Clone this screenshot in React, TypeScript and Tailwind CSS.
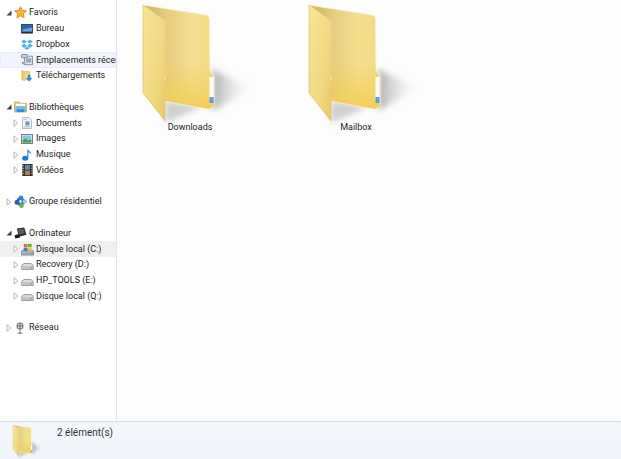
import React from "react";

const Tri = ({ open }: { open?: boolean }) =>
  open ? (
    <svg width="6" height="6" viewBox="0 0 6 6" className="shrink-0"><path d="M5.5 0.5V5.5H0.5Z" fill="#404040" /></svg>
  ) : (
    <svg width="6" height="8" viewBox="0 0 6 8" className="shrink-0"><path d="M1 .8L4.8 4 1 7.2Z" fill="#fff" stroke="#a6a6a6" strokeWidth=".8" /></svg>
  );

const Star = () => (
  <svg width="13" height="13" viewBox="0 0 14 14"><path d="M7 .8l1.900 4 4.400.5-3.200 3 .8 4.400L7 10.600l-3.900 2.100.8-4.400-3.200-3 4.400-.5z" fill="#f7b733" stroke="#e0792b" strokeWidth=".9" /></svg>
);
const Desktop = () => (
  <svg width="12" height="10" viewBox="0 0 14 12"><rect x=".5" y=".5" width="13" height="9" fill="#2a63b4" stroke="#1d3558" /><path d="M1 7.500c3-2 7-1.500 12-3.500V9H1z" fill="#6fa6e0" /><rect x="0" y="9.500" width="14" height="2" fill="#26313f" /></svg>
);
const Dropbox = () => (
  <svg width="12" height="11" viewBox="0 0 14 13" fill="#5cb0ec"><path d="M3.500 .5L7 3 3.500 5.500 0 3zM10.500 .5L14 3l-3.500 2.500L7 3zM3.500 5.500L7 8l-3.500 2.500L0 8zM10.500 5.500L14 8l-3.500 2.500L7 8zM3.800 11L7 8.800 10.200 11 7 13z" /></svg>
);
const Recent = () => (
  <svg width="12" height="12" viewBox="0 0 14 14"><rect x="4" y="2.500" width="9.500" height="10" fill="#dfe6ec" stroke="#7c8a96" /><rect x="6" y="5" width="6" height="5" fill="#8fa9c0" /><rect x=".5" y=".5" width="7" height="4" rx="1.500" fill="#c9cfd4" stroke="#70787f" /><rect x="1" y="9" width="4" height="3" fill="#9aa4ac" /></svg>
);
const DownloadIcon = () => (
  <svg width="12" height="13" viewBox="0 0 14 14"><path d="M1 1l3 1.500h6V12H1z" fill="#f2d684" stroke="#c8a654" strokeWidth=".7" /><path d="M1 1l3.500 2v11L1 12z" fill="#e9c766" /><path d="M8 6h3v4h2.200l-3.700 4-3.700-4H8z" fill="#2d86e0" /></svg>
);
const Libraries = () => (
  <svg width="13" height="12" viewBox="0 0 14 13"><path d="M.5 1h5l1 1.500h7V12H.5z" fill="#ecc66c" stroke="#bb9a4c" strokeWidth=".7" /><rect x="2" y="3" width="10" height="4" fill="#fff" /><path d="M.8 12l1-6.500h11.400V12z" fill="#7cbce6" /><path d="M3 9h8v3H3z" fill="#3c8ccb" /></svg>
);
const Docs = () => (
  <svg width="10" height="12" viewBox="0 0 12 14"><path d="M.5.500h8l3 3v10H.500z" fill="#f6f7f9" stroke="#a3abb3" /><rect x="4" y="5" width="5" height="5" fill="#6d9ad0" /><path d="M2 11.500h8M2 3h4" stroke="#a9b2ba" /></svg>
);
const Images = () => (
  <svg width="12" height="10" viewBox="0 0 13 11"><rect x=".5" y=".5" width="12" height="10" fill="#fff" stroke="#66727c" /><rect x="1.500" y="1.500" width="10" height="5" fill="#8cc4ec" /><path d="M1.500 9.500V7l3-2 3 2 4-1v3.500z" fill="#4d9a53" /></svg>
);
const Music = () => (
  <svg width="11" height="13" viewBox="0 0 12 14"><ellipse cx="3.500" cy="11" rx="3.300" ry="2.700" fill="#2476c9" /><path d="M5.800 11V.5c.5 2.500 4.500 3 4.500 6.500-1-1.800-2.800-2.300-3.300-2.500V11z" fill="#2f86d8" /></svg>
);
const Video = () => (
  <svg width="11" height="12" viewBox="0 0 12 14"><rect width="12" height="14" fill="#2c3138" /><rect x="3" y="1" width="6" height="5.500" fill="#5d8fb5" /><rect x="3" y="7.500" width="6" height="5.500" fill="#b27c4a" /><path d="M1 1.500v1M1 4.500v1M1 7.500v1M1 10.500v1M11 1.500v1M11 4.500v1M11 7.500v1M11 10.500v1" stroke="#ddd" strokeWidth="1.300" /></svg>
);
const Home = () => (
  <svg width="13" height="13" viewBox="0 0 14 14"><circle cx="7" cy="7" r="4.500" fill="#2e66b8" /><circle cx="7.500" cy="3" r="2.500" fill="#3f80cf" /><circle cx="3" cy="8" r="2.500" fill="#2f5fb0" /><circle cx="8" cy="11.500" r="2.500" fill="#69b24a" /><circle cx="11.500" cy="7" r="2.300" fill="#8ec7e8" /><circle cx="7" cy="7" r="1.500" fill="#dff0fa" /></svg>
);
const Computer = () => (
  <svg width="13" height="12" viewBox="0 0 14 13"><path d="M3 1.500l8-1 2.500 8-8 2z" fill="#2b2d2e" /><path d="M4.500 2.500l5.500-.7 1.500 5-5.500 1.200z" fill="#59605f" /><path d="M.5 9l5-1.500 1 4-5 1z" fill="#1a1a1a" /></svg>
);
const DriveC = () => (
  <svg width="13" height="13" viewBox="0 0 14 14"><path d="M0 9.500l2-2h10l2 2V13H0z" fill="#a8afb8" stroke="#59626b" strokeWidth=".6" /><rect x="11" y="10.500" width="2" height="1.200" fill="#4fc04f" /><rect x="3" y="1" width="4" height="3.500" fill="#e2672a" /><rect x="7.500" y="1" width="4" height="3.500" fill="#6bb03f" /><rect x="3" y="5" width="4" height="3.500" fill="#3a7fd0" /><rect x="7.500" y="5" width="4" height="3.500" fill="#f0c53c" /></svg>
);
const Drive = () => (
  <svg width="13" height="7" viewBox="0 0 14 8" className="mt-[3px]"><path d="M.5 3L2.800.5h8.400L13.500 3v4.500H.500z" fill="#d8dadc" stroke="#6b7278" strokeWidth=".8" /><path d="M1 3.500h12v3.500H1z" fill="#bfc3c6" /><rect x="10.500" y="4.500" width="2" height="1.300" fill="#55bd55" /></svg>
);
const Network = () => (
  <svg width="8" height="12" viewBox="0 0 10 14"><path d="M5 7v7M2 13.500h6" stroke="#555" /><rect x="1.500" y="1" width="7" height="7" rx="2" fill="#d8dadb" stroke="#3f4548" /><path d="M1 4.500h8M5 1v7" stroke="#555" /></svg>
);

type RowProps = { icon: React.ReactNode; label: string; sub?: boolean; tri?: "open" | "closed"; hover?: "light" | "grey" };

const Row = ({ icon, label, sub, tri, hover }: RowProps) => (
  <div
    className={`flex h-[15.75px] items-center ${sub ? "pl-[12px]" : "pl-[5px]"} ${
      hover === "light" ? "bg-[#f1f5fb] shadow-[inset_0_0_0_0.5px_#dfe8f4]" : hover === "grey" ? "bg-[#f0f0f0]" : ""
    }`}
  >
    <span className="flex w-[8px] shrink-0 items-center justify-center">{tri ? <Tri open={tri === "open"} /> : null}</span>
    <span className="flex w-[14px] shrink-0 items-center justify-center">{icon}</span>
    <span className="ml-[2px] whitespace-nowrap">{label}</span>
  </div>
);

const Group = ({ children }: { children: React.ReactNode }) => <div className="mb-[15.75px]">{children}</div>;

const Folder = ({ size = 110 }: { size?: number }) => {
  const id = `f${size}`;
  return (
    <svg width={size} height={size * 1.15} viewBox="0 0 110 126.500" className="block overflow-visible">
      <defs>
        <linearGradient id={`${id}a`} x1="0" x2="1" y1="0" y2="0">
          <stop offset="0" stopColor="#cfb05c" />
          <stop offset=".35" stopColor="#e6cd7e" />
          <stop offset=".7" stopColor="#f4df90" />
          <stop offset="1" stopColor="#f4da80" />
        </linearGradient>
        <linearGradient id={`${id}v`} x1="0" x2="0" y1="0" y2="1">
          <stop offset=".55" stopColor="#f2cb4f" stopOpacity="0" />
          <stop offset="1" stopColor="#f2cb4f" stopOpacity=".85" />
        </linearGradient>
        <linearGradient id={`${id}b`} x1="0" x2="1" y1="0" y2="1">
          <stop offset="0" stopColor="#f6e597" />
          <stop offset=".6" stopColor="#f2d981" />
          <stop offset="1" stopColor="#e8c766" />
        </linearGradient>
        <linearGradient id={`${id}s`} x1="0" x2="1" y1="0" y2="0">
          <stop offset="0" stopColor="#777" stopOpacity=".6" />
          <stop offset=".5" stopColor="#aaa" stopOpacity=".3" />
          <stop offset="1" stopColor="#ccc" stopOpacity="0" />
        </linearGradient>
        <filter id={`${id}bl`} x="-30%" y="-30%" width="160%" height="160%">
          <feGaussianBlur stdDeviation="3" />
        </filter>
      </defs>
      <path d="M72 68L112 87 72 110Z" fill={`url(#${id}s)`} filter={`url(#${id}bl)`} />
      <path d="M25 100L62 106 25 122Z" fill="#888" opacity=".4" filter={`url(#${id}bl)`} />
      <path d="M3 4L67 14Q69.500 15 69.500 18L70 70L74 75V105L69 108L25 100V20Z" fill={`url(#${id}a)`} stroke="#f7f2dc" strokeWidth="1" />
      <path d="M3 4L67 14Q69.500 15 69.500 18L70 70L74 75V105L69 108L25 100V20Z" fill={`url(#${id}v)`} />
      <rect x="69.500" y="76" width="4" height="23" fill="#fff" />
      <rect x="69.500" y="96" width="4" height="6" fill="#5c9be0" />
      <path d="M3 4L22 17Q25 19 25 23V73L24 78L25 80V120L3 92Z" fill={`url(#${id}b)`} stroke="#dcc071" strokeWidth=".7" />
    </svg>
  );
};

const Item = ({ name }: { name: string }) => (
  <div className="flex w-[166px] flex-col items-start">
    <Folder />
    <div className="-mt-[5px] w-[100px] text-center text-[#1a1a1a]">{name}</div>
  </div>
);

export default function App() {
  return (
    <div className="flex h-[459px] w-[621px] flex-col overflow-hidden bg-white text-[9px] leading-none text-[#222] [font-family:Roboto,'Noto_Sans',sans-serif]">
      <div className="flex min-h-0 flex-1">
        <aside className="w-[117px] shrink-0 overflow-hidden border-r border-[#dbe6f3] pt-[5px]">
          <Group>
            <Row icon={<Star />} label="Favoris" tri="open" />
            <Row sub icon={<Desktop />} label="Bureau" />
            <Row sub icon={<Dropbox />} label="Dropbox" />
            <Row sub icon={<Recent />} label="Emplacements récents" hover="light" />
            <Row sub icon={<DownloadIcon />} label="Téléchargements" />
          </Group>
          <Group>
            <Row icon={<Libraries />} label="Bibliothèques" tri="open" />
            <Row sub icon={<Docs />} label="Documents" tri="closed" />
            <Row sub icon={<Images />} label="Images" tri="closed" />
            <Row sub icon={<Music />} label="Musique" tri="closed" />
            <Row sub icon={<Video />} label="Vidéos" tri="closed" />
          </Group>
          <Group>
            <Row icon={<Home />} label="Groupe résidentiel" tri="closed" />
          </Group>
          <Group>
            <Row icon={<Computer />} label="Ordinateur" tri="open" />
            <Row sub icon={<DriveC />} label="Disque local (C:)" tri="closed" hover="grey" />
            <Row sub icon={<Drive />} label="Recovery (D:)" tri="closed" />
            <Row sub icon={<Drive />} label="HP_TOOLS (E:)" tri="closed" />
            <Row sub icon={<Drive />} label="Disque local (Q:)" tri="closed" />
          </Group>
          <Row icon={<Network />} label="Réseau" tri="closed" />
        </aside>
        <main className="flex flex-1 items-start bg-[#fdfdfe] pl-[23px] pt-[1px]">
          <Item name="Downloads" />
          <Item name="Mailbox" />
        </main>
      </div>
      <footer className="flex h-[38px] shrink-0 border-t border-[#d6e0ee] bg-gradient-to-b from-[#f3f7fc] to-[#f0f5fb] pl-[12px] pt-[2px]">
        <div className="w-[45px] shrink-0"><Folder size={30} /></div>
        <div className="pt-[4px] text-[10px] text-[#333]">2 élément(s)</div>
      </footer>
    </div>
  );
}
